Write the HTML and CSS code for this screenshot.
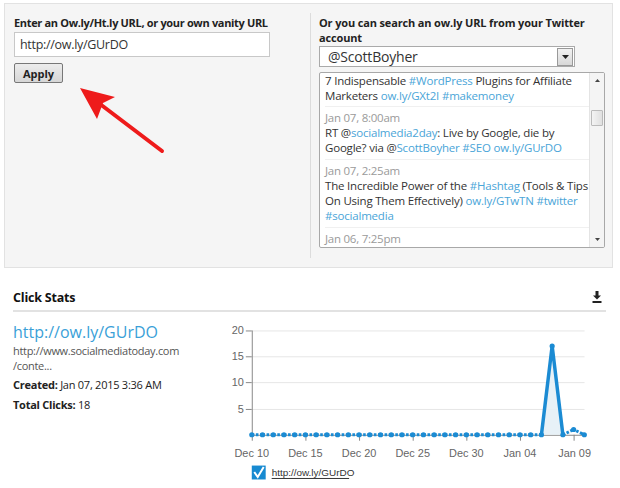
FILE: index.html
```html
<!DOCTYPE html>
<html>
<head>
<meta charset="utf-8">
<link rel="stylesheet" href="styles.css">
</head>
<body>
<div class="panel">
  <div class="col col-left">
    <div class="lbl">Enter an Ow.ly/Ht.ly URL, or your own vanity URL</div>
    <div class="input">http://ow.ly/GUrDO</div>
    <button class="apply">Apply</button>
  </div>
  <div class="col col-right">
    <div class="lbl">Or you can search an ow.ly URL from your Twitter account</div>
    <div class="select">
      <span class="sel-text">@ScottBoyher</span>
      <span class="dd"><svg width="7" height="4" viewBox="0 0 7 4"><path d="M0 0H7L3.5 4Z" fill="#222"/></svg></span>
    </div>
    <div class="list">
      <div class="feed">
        <div class="item first">
          <div class="txt">7 Indispensable <span class="lk">#WordPress</span> Plugins for Affiliate Marketers <span class="lk">ow.ly/GXt2I</span> <span class="lk">#makemoney</span></div>
        </div>
        <div class="item">
          <div class="date">Jan 07, 8:00am</div>
          <div class="txt">RT @<span class="lk">socialmedia2day</span>: Live by Google, die by Google? via @<span class="lk">ScottBoyher</span> <span class="lk">#SEO</span> <span class="lk">ow.ly/GUrDO</span></div>
        </div>
        <div class="item">
          <div class="date">Jan 07, 2:25am</div>
          <div class="txt">The Incredible Power of the <span class="lk">#Hashtag</span> (Tools &amp; Tips On Using Them Effectively) <span class="lk">ow.ly/GTwTN</span> <span class="lk">#twitter</span> <span class="lk">#socialmedia</span></div>
        </div>
        <div class="item last">
          <div class="date">Jan 06, 7:25pm</div>
        </div>
      </div>
      <div class="scrollbar">
        <div class="sb-btn"><svg width="5" height="3" viewBox="0 0 5 3"><path d="M0 3H5L2.5 0Z" fill="#444"/></svg></div>
        <div class="sb-track"><div class="sb-thumb"></div></div>
        <div class="sb-btn"><svg width="5" height="3" viewBox="0 0 5 3"><path d="M0 0H5L2.5 3Z" fill="#444"/></svg></div>
      </div>
    </div>
  </div>
  <svg class="arrow" width="100" height="80" viewBox="70 80 100 80">
    <line x1="162" y1="151" x2="100" y2="104" stroke="#ee1b1b" stroke-width="4" stroke-linecap="round"/>
    <path d="M80 88 L115 97 L103 103 L97 119 Z" fill="#ee1b1b"/>
  </svg>
</div>

<div class="stats">
  <div class="stats-head">
    <span class="stats-title">Click Stats</span>
    <svg class="dl" width="10" height="12" viewBox="0 0 10 12">
      <rect x="3.5" y="0" width="3" height="5" fill="#222"/>
      <path d="M1 4.5H9L5 8.5Z" fill="#222"/>
      <rect x="0.5" y="10" width="9" height="2" fill="#222"/>
    </svg>
  </div>
  <div class="stats-body">
    <div class="info">
      <div class="big-link">http://ow.ly/GUrDO</div>
      <div class="long-url">http://www.socialmediatoday.com<br>/conte...</div>
      <div class="meta"><b>Created:</b> Jan 07, 2015 3:36 AM</div>
      <div class="meta meta2"><b>Total Clicks:</b> 18</div>
    </div>
    <svg class="chart" width="390" height="177" viewBox="220 311 390 177">
      <g stroke="#e6e6e6" stroke-width="1">
        <line x1="253" y1="329.5" x2="588" y2="329.5"/>
        <line x1="253" y1="355.5" x2="588" y2="355.5"/>
        <line x1="253" y1="381.5" x2="588" y2="381.5"/>
        <line x1="253" y1="408.5" x2="588" y2="408.5"/>
      </g>
      <g stroke="#888" stroke-width="1">
        <line x1="253.5" y1="329" x2="253.5" y2="434"/>
        <line x1="247" y1="329.5" x2="253" y2="329.5"/>
        <line x1="247" y1="355.5" x2="253" y2="355.5"/>
        <line x1="247" y1="381.5" x2="253" y2="381.5"/>
        <line x1="247" y1="408.5" x2="253" y2="408.5"/>
        <line x1="253" y1="434.5" x2="588" y2="434.5"/>
        <line x1="253.5" y1="434" x2="253.5" y2="440"/>
        <line x1="307.5" y1="434" x2="307.5" y2="440"/>
        <line x1="361.5" y1="434" x2="361.5" y2="440"/>
        <line x1="415.5" y1="434" x2="415.5" y2="440"/>
        <line x1="469.5" y1="434" x2="469.5" y2="440"/>
        <line x1="523.5" y1="434" x2="523.5" y2="440"/>
        <line x1="577.5" y1="434" x2="577.5" y2="440"/>
      </g>
      <g class="axis-lbl" text-anchor="end">
        <text x="245" y="333">20</text>
        <text x="245" y="359">15</text>
        <text x="245" y="385">10</text>
        <text x="245" y="412">5</text>
      </g>
      <g class="axis-lbl" text-anchor="middle">
        <text x="253" y="456">Dec 10</text>
        <text x="307" y="456">Dec 15</text>
        <text x="361" y="456">Dec 20</text>
        <text x="415" y="456">Dec 25</text>
        <text x="469" y="456">Dec 30</text>
        <text x="523" y="456">Jan 04</text>
        <text x="578" y="456">Jan 09</text>
      </g>
      <path d="M545 434 L556 344.5 L566.6 434 Z" fill="#e4eff6" opacity="0.9"/>
      <polyline points="253,434 544.6,434" fill="none" stroke="#1b8bd3" stroke-width="3" stroke-dasharray="5 1.6 2.6 1.6" stroke-dashoffset="2.5"/>
      <polyline points="544.6,434 555.4,344.5 566.2,434" fill="none" stroke="#1b8bd3" stroke-width="3.5" stroke-linejoin="round"/>
      <polyline points="566.2,434 577,428.7 587.8,434" fill="none" stroke="#1b8bd3" stroke-width="3" stroke-dasharray="5 1.6 2.6 1.6" stroke-dashoffset="2.5"/>
      <g id="dots" fill="#1b8bd3"></g>
      <rect x="253" y="465" width="14" height="14" fill="#178ad1"/>
      <path d="M255.5 471.5 L259 476.5 L265 466.5" fill="none" stroke="#fff" stroke-width="2"/>
      <text class="legend" x="273" y="476">http://ow.ly/GUrDO</text>
      <line x1="273" y1="478" x2="351" y2="478" stroke="#333" stroke-width="1"/>
    </svg>
  </div>
</div>
<script src="chart.js"></script>
</body>
</html>
```

FILE: chart.js
```js
(function () {
  var g = document.getElementById('dots');
  var vals = [];
  for (var i = 0; i < 32; i++) vals.push(0);
  vals[28] = 17; vals[30] = 1;
  var ns = 'http://www.w3.org/2000/svg';
  for (var d = 0; d < 32; d++) {
    var c = document.createElementNS(ns, 'circle');
    c.setAttribute('cx', (253 + d * 10.8).toFixed(1));
    c.setAttribute('cy', (434 - vals[d] * 5.26).toFixed(1));
    c.setAttribute('r', '2.6');
    g.appendChild(c);
  }
})();
```

FILE: styles.css
```css
* { box-sizing: border-box; }
body {
  margin: 0;
  background: #fff;
  font-family: "Open Sans", "Liberation Sans", sans-serif;
  color: #222;
  width: 620px;
  height: 488px;
  overflow: hidden;
}
.panel {
  position: relative;
  display: flex;
  margin: 3px 0 0 4px;
  width: 609px;
  height: 265px;
  border: 1px solid #e2e2e2;
  background: #f5f5f5;
}
.col-left {
  flex: none;
  width: 305px;
  padding: 11px 9px;
}
.col-right {
  flex: 1;
  min-width: 0;
  margin: 9px 0;
  border-left: 1px solid #dcdcdc;
  padding: 2px 0 0 8px;
}
.lbl {
  font-size: 11px;
  font-weight: 700;
  line-height: 15px;
  letter-spacing: -0.33px;
  color: #222;
}
.input {
  margin-top: 2px;
  width: 256px;
  height: 25px;
  background: #fff;
  border: 1px solid #c8c8c8;
  font-size: 12.5px;
  letter-spacing: -0.3px;
  line-height: 23px;
  padding-left: 5px;
  color: #333;
}
.apply {
  display: block;
  margin-top: 6px;
  width: 49px;
  height: 20px;
  padding: 0;
  border: 1px solid #777;
  border-radius: 2px;
  background: linear-gradient(#ececec, #d6d6d6);
  font-family: "Open Sans", "Liberation Sans", sans-serif;
  font-weight: 700;
  font-size: 11px;
  color: #222;
}
.col-right .lbl {
  width: 280px;
  letter-spacing: -0.15px;
}
.select {
  margin-top: 1px;
  width: 256px;
  height: 21px;
  display: flex;
  align-items: center;
  justify-content: space-between;
  background: #fff;
  border: 1px solid #aaa;
  padding: 0 1px 0 8px;
}
.sel-text {
  font-size: 14px;
  letter-spacing: -0.2px;
  color: #333;
}
.dd {
  width: 16px;
  height: 18px;
  display: flex;
  align-items: center;
  justify-content: center;
  background: linear-gradient(#f2f2f2, #d8d8d8);
  border: 1px solid #999;
}
.list {
  margin-top: 5px;
  width: 286px;
  height: 176px;
  display: flex;
  background: #fff;
  border: 1px solid #a8a8a8;
  border-radius: 2px;
  overflow: hidden;
}
.feed {
  flex: 1;
  overflow: hidden;
  padding: 0 0 0 5px;
}
.item {
  border-bottom: 1px solid #f0f0f0;
  padding-bottom: 4px;
}
.item.first { padding-bottom: 3px; }
.item.last { border-bottom: 0; }
.date {
  padding-top: 3px;
  font-size: 11.5px;
  letter-spacing: -0.25px;
  line-height: 15px;
  color: #9a9a9a;
}
.txt {
  font-size: 11.5px;
  letter-spacing: -0.2px;
  line-height: 15px;
  color: #333;
}
.lk { color: #4aa5d8; }
.scrollbar {
  width: 15px;
  display: flex;
  flex-direction: column;
  background: #f4f4f4;
  border-left: 1px solid #e4e4e4;
}
.sb-btn {
  height: 15px;
  display: flex;
  align-items: center;
  justify-content: center;
}
.sb-track {
  flex: 1;
  padding-top: 22px;
}
.sb-thumb {
  margin: 0 1px;
  height: 16px;
  border: 1px solid #bbb;
  border-radius: 1px;
  background: linear-gradient(90deg, #f4f4f4, #e0e0e0);
}
.arrow {
  position: absolute;
  left: 65px;
  top: 76px;
}
.stats {
  margin: 20px 14px 0 13px;
}
.stats-head {
  display: flex;
  justify-content: space-between;
  align-items: center;
  height: 24px;
  padding-bottom: 4px;
  border-bottom: 2px solid #e2e2e2;
}
.stats-title {
  font-size: 12.5px;
  letter-spacing: -0.2px;
  font-weight: 700;
  color: #111;
}
.dl { margin-right: 4px; }
.stats-body {
  display: flex;
}
.info {
  width: 207px;
  padding-top: 9px;
}
.big-link {
  font-size: 16px;
  line-height: 22px;
  color: #3a9fd8;
}
.long-url {
  font-size: 11px;
  letter-spacing: -0.3px;
  line-height: 15px;
  color: #555;
}
.meta {
  margin-top: 4px;
  font-size: 11px;
  letter-spacing: -0.25px;
  line-height: 15px;
  color: #222;
}
.meta2 { margin-top: 5px; }
.chart { display: block; }
.axis-lbl {
  font-family: "Liberation Sans", Arial, sans-serif;
  font-size: 11px;
  fill: #666;
}
.legend {
  font-family: "Liberation Sans", Arial, sans-serif;
  font-size: 10px;
  fill: #333;
}
```
